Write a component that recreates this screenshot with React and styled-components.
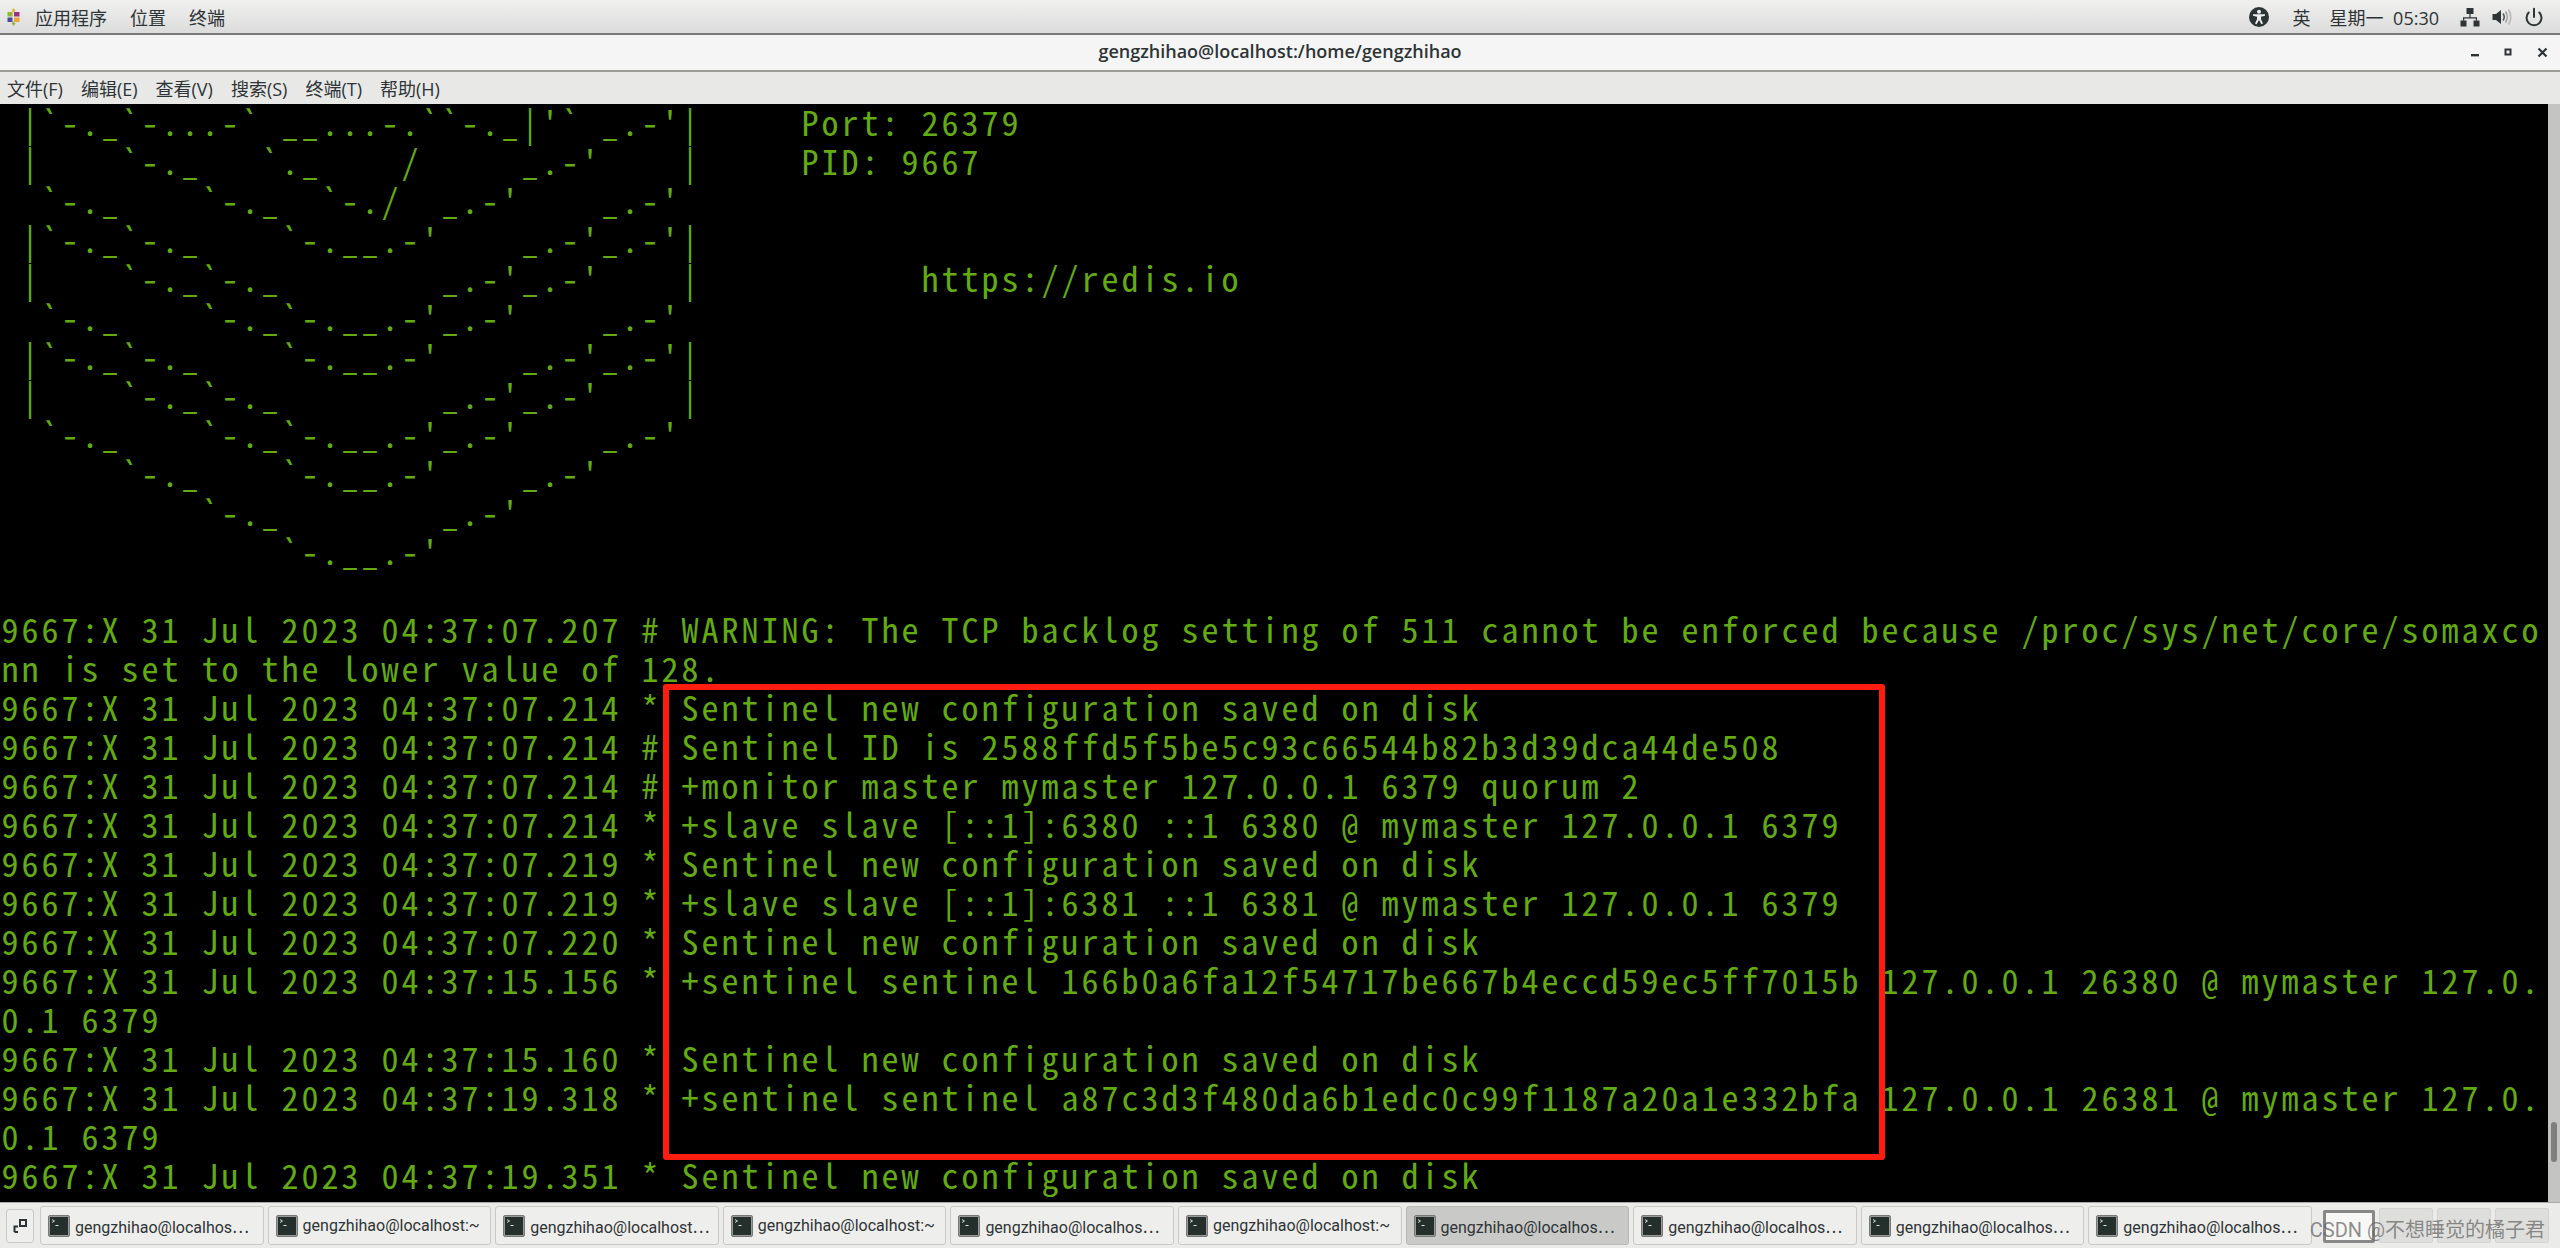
import React from "react";
import styled, { createGlobalStyle } from "styled-components";
import { Power } from "lucide-react";

const UI_FONT = `"Open Sans", "Noto Sans CJK SC", sans-serif`;

const GlobalStyle = createGlobalStyle`
  html, body { margin: 0; padding: 0; background: #000; overflow: hidden; }
  body { font-family: ${UI_FONT}; }
`;

const Desktop = styled.div`
  width: 2560px;
  height: 1248px;
  display: flex;
  flex-direction: column;
  position: relative;
  overflow: hidden;
`;

const TopBar = styled.div`
  height: 33px;
  flex: none;
  display: flex;
  align-items: center;
  justify-content: space-between;
  padding: 0 16px 0 7px;
  background: linear-gradient(#f0f0ef, #dcdcdc);
  border-bottom: 2px solid #7b7b7b;
  color: #2e3436;
  font-size: 18px;
`;

const TopGroup = styled.div`
  display: flex;
  align-items: center;
  gap: ${(p) => p.$gap || 0}px;
`;

const AppMenu = styled.span`
  margin-left: 15px;
`;

const TrayGap = styled.span`
  display: flex;
  align-items: center;
  margin-right: ${(p) => p.$right || 0}px;
`;

const Clock = styled.span`
  margin-right: 21px;
  word-spacing: 5px;
`;

const TitleBar = styled.div`
  height: 37px;
  box-sizing: border-box;
  padding-bottom: 4px;
  flex: none;
  position: relative;
  display: flex;
  align-items: center;
  justify-content: center;
  background: #f5f5f5;
  border-bottom: 2px solid #9a9a96;
  color: #2e3436;
  font-size: 18px;
  font-weight: 600;
`;

const WindowButtons = styled.div`
  position: absolute;
  right: 9px;
  top: 10px;
  display: flex;
  gap: 18px;
  align-items: center;
`;

const MenuBar = styled.div`
  height: 32px;
  flex: none;
  display: flex;
  align-items: center;
  padding-left: 7px;
  gap: 18px;
  background: #e8e8e6;
  color: #2e3436;
  font-size: 18px;
`;

const Terminal = styled.div`
  flex: 1;
  min-height: 0;
  display: flex;
  background: #000;
  position: relative;
`;

const Screen = styled.div`
  flex: 1;
  min-width: 0;
  margin-top: -2px;
  padding-left: 1.5px;
  color: #62ab12;
  font-family: "Noto Sans Mono CJK SC", "DejaVu Sans Mono", monospace;
  font-size: 34px;
  letter-spacing: 3px;
  line-height: 39px;
`;

const Line = styled.div`
  height: 39px;
  white-space: pre;
`;

const Scrollbar = styled.div`
  width: 12px;
  flex: none;
  background: #c4c4c2;
  display: flex;
  flex-direction: column;
  align-items: center;
  justify-content: flex-end;
  padding-bottom: 40px;
`;

const Thumb = styled.div`
  width: 6px;
  height: 40px;
  border-radius: 3px;
  background: #7f7f7f;
`;

const RedBox = styled.div`
  position: absolute;
  left: 663px;
  top: 580px;
  width: 1222px;
  height: 476px;
  box-sizing: border-box;
  border: 6px solid #ff1d10;
  border-radius: 3px;
`;

const TaskBar = styled.div`
  height: 46px;
  flex: none;
  display: flex;
  align-items: center;
  box-sizing: border-box;
  padding: 3px 13px 3px 6px;
  background: #ebebe9;
  border-top: 1px solid #aaa;
`;

const ShowDesktop = styled.div`
  width: 28px;
  height: 34px;
  box-sizing: border-box;
  flex: none;
  margin-right: 6px;
  display: flex;
  align-items: center;
  justify-content: center;
  border: 1px solid #c9c9c7;
  border-radius: 3px;
  background: #eeeeec;
`;

const TaskList = styled.div`
  width: 2272px;
  flex: none;
  display: flex;
  gap: 4px;
`;

const Task = styled.div`
  flex: 1;
  min-width: 0;
  height: 39px;
  box-sizing: border-box;
  display: flex;
  align-items: center;
  gap: 5px;
  padding: 0 7px;
  border-radius: 3px;
  border: 1px solid ${(p) => (p.$active ? "#b8b8b6" : "#c9c9c7")};
  background: ${(p) => (p.$active ? "#c9c9c7" : "#eeeeec")};
  color: #2e3436;
  font-family: Roboto, "Noto Sans CJK SC", sans-serif;
  font-size: 16px;

  svg {
    flex: none;
  }
`;

const TaskLabel = styled.span`
  white-space: nowrap;
`;

const Workspaces = styled.div`
  display: flex;
  align-items: flex-end;
  gap: 4px;
  margin-left: 11px;
`;

const Workspace = styled.div`
  width: ${(p) => (p.$active ? 52 : 54)}px;
  height: ${(p) => (p.$active ? 33 : 35)}px;
  box-sizing: border-box;
  border-radius: 2px;
  border: ${(p) => (p.$active ? "3px solid #888" : "1px solid #d4d4d2")};
  background: ${(p) => (p.$active ? "#f7f7f5" : "#dededc")};
`;

const Watermark = styled.div`
  position: absolute;
  right: 15px;
  bottom: 2px;
  color: rgba(100, 100, 100, 0.72);
  font-family: Roboto, "Noto Sans CJK SC", sans-serif;
  font-size: 20px;
  line-height: 32px;
  white-space: nowrap;
`;

const LOGO_ROWS = [
  " |`-._`-...-` __...-.``-._|'` _.-'|     Port: 26379",
  " |    `-._   `._    /     _.-'    |     PID: 9667",
  "  `-._    `-._  `-./  _.-'    _.-'",
  " |`-._`-._    `-.__.-'    _.-'_.-'|",
  " |    `-._`-._        _.-'_.-'    |           https://redis.io",
  "  `-._    `-._`-.__.-'_.-'    _.-'",
  " |`-._`-._    `-.__.-'    _.-'_.-'|",
  " |    `-._`-._        _.-'_.-'    |",
  "  `-._    `-._`-.__.-'_.-'    _.-'",
  "      `-._    `-.__.-'    _.-'",
  "          `-._        _.-'",
  "              `-.__.-'",
  " ",
];

const LOG_ROWS = [
  "9667:X 31 Jul 2023 04:37:07.207 # WARNING: The TCP backlog setting of 511 cannot be enforced because /proc/sys/net/core/somaxco",
  "nn is set to the lower value of 128.",
  "9667:X 31 Jul 2023 04:37:07.214 * Sentinel new configuration saved on disk",
  "9667:X 31 Jul 2023 04:37:07.214 # Sentinel ID is 2588ffd5f5be5c93c66544b82b3d39dca44de508",
  "9667:X 31 Jul 2023 04:37:07.214 # +monitor master mymaster 127.0.0.1 6379 quorum 2",
  "9667:X 31 Jul 2023 04:37:07.214 * +slave slave [::1]:6380 ::1 6380 @ mymaster 127.0.0.1 6379",
  "9667:X 31 Jul 2023 04:37:07.219 * Sentinel new configuration saved on disk",
  "9667:X 31 Jul 2023 04:37:07.219 * +slave slave [::1]:6381 ::1 6381 @ mymaster 127.0.0.1 6379",
  "9667:X 31 Jul 2023 04:37:07.220 * Sentinel new configuration saved on disk",
  "9667:X 31 Jul 2023 04:37:15.156 * +sentinel sentinel 166b0a6fa12f54717be667b4eccd59ec5ff7015b 127.0.0.1 26380 @ mymaster 127.0.",
  "0.1 6379",
  "9667:X 31 Jul 2023 04:37:15.160 * Sentinel new configuration saved on disk",
  "9667:X 31 Jul 2023 04:37:19.318 * +sentinel sentinel a87c3d3f480da6b1edc0c99f1187a20a1e332bfa 127.0.0.1 26381 @ mymaster 127.0.",
  "0.1 6379",
  "9667:X 31 Jul 2023 04:37:19.351 * Sentinel new configuration saved on disk",
];

const TASKS = [
  { label: "gengzhihao@localhos⋯" },
  { label: "gengzhihao@localhost:~" },
  { label: "gengzhihao@localhost⋯" },
  { label: "gengzhihao@localhost:~" },
  { label: "gengzhihao@localhos⋯" },
  { label: "gengzhihao@localhost:~" },
  { label: "gengzhihao@localhos⋯", active: true },
  { label: "gengzhihao@localhos⋯" },
  { label: "gengzhihao@localhos⋯" },
  { label: "gengzhihao@localhos⋯" },
];

const CentosLogo = () => (
  <svg width="13" height="18" viewBox="0 0 13 18">
    <path d="M6.5 0l2 2.5-2 2-2-2z" fill="#e5b53c" />
    <rect x="0.5" y="4" width="5" height="4.5" fill="#8fb83a" />
    <rect x="7" y="4" width="5.5" height="4.5" fill="#a0307f" />
    <rect x="0.5" y="9.5" width="5" height="4.5" fill="#4c4a9c" />
    <rect x="7" y="9.5" width="5.5" height="4.5" fill="#eaa733" />
    <path d="M6.5 18l-2-2.5 2-2 2 2z" fill="#8fb83a" />
  </svg>
);

const AccessIcon = () => (
  <svg width="20" height="20" viewBox="0 0 20 20">
    <circle cx="10" cy="10" r="10" fill="#2e3436" />
    <circle cx="10" cy="4.8" r="2" fill="#eee" />
    <path d="M4 7.2h12v1.6l-4 1v2.4l2 4.4-1.6.6L10 13l-2.4 4.2L6 16.6l2-4.4V9.8l-4-1z" fill="#eee" />
  </svg>
);

const NetworkIcon = () => (
  <svg width="20" height="20" viewBox="0 0 20 20" fill="#2e3436">
    <rect x="6.5" y="1" width="7" height="6" />
    <rect x="0.5" y="13.5" width="6" height="6" />
    <rect x="13.5" y="13.5" width="6" height="6" />
    <path d="M9.4 7h1.2v3.2h6.4v3.3h-1.2v-2.1H4.2v2.1H3v-3.3h6.4z" />
  </svg>
);

const VolumeIcon = () => (
  <svg width="20" height="20" viewBox="0 0 20 20" fill="none">
    <path d="M0.5 7h3.5l5-4v14l-5-4H0.5z" fill="#2e3436" />
    <path d="M11 6.5c1.4 2 1.4 5 0 7" stroke="#55595a" strokeWidth="1.6" />
    <path d="M13.5 4.5c2.2 3.2 2.2 7.8 0 11" stroke="#9a9c9c" strokeWidth="1.6" />
    <path d="M16.5 2.5c3 4.4 3 10.6 0 15" stroke="#b5b6b6" strokeWidth="1.6" />
  </svg>
);

const MinimizeIcon = () => (
  <svg width="16" height="16" viewBox="0 0 16 16">
    <rect x="4" y="9" width="8" height="2.4" fill="#2e3436" />
  </svg>
);

const MaximizeIcon = () => (
  <svg width="16" height="16" viewBox="0 0 16 16">
    <rect x="4.5" y="4.5" width="5" height="5" fill="none" stroke="#2e3436" strokeWidth="2" />
  </svg>
);

const CloseIcon = () => (
  <svg width="16" height="16" viewBox="0 0 16 16">
    <path d="M3.5 3.5l8 8M11.5 3.5l-8 8" stroke="#2e3436" strokeWidth="2.2" />
  </svg>
);

const ShowDesktopIcon = () => (
  <svg width="15" height="15" viewBox="0 0 15 15" fill="none" stroke="#2e3436" strokeWidth="2">
    <rect x="7" y="2" width="6" height="6" />
    <path d="M1.5 14V8.5H5M1.5 14H5" />
  </svg>
);

const TerminalIcon = () => (
  <svg width="22" height="22" viewBox="0 0 22 22">
    <rect x="0.5" y="0.5" width="21" height="21" rx="1.5" fill="#9a9b98" stroke="#77787a" />
    <rect x="2" y="2" width="18" height="18" fill="#25302c" />
    <path d="M4 4.5l2.5 1.5L4 7.5" fill="none" stroke="#dfe5e2" strokeWidth="0.9" />
    <rect x="7.5" y="10" width="3" height="1" fill="#dfe5e2" />
  </svg>
);

const App = () => (
  <Desktop>
    <GlobalStyle />
    <TopBar>
      <TopGroup $gap={23}>
        <TopGroup>
          <CentosLogo />
          <AppMenu>应用程序</AppMenu>
        </TopGroup>
        <span>位置</span>
        <span>终端</span>
      </TopGroup>
      <TopGroup>
        <TrayGap $right={23}><AccessIcon /></TrayGap>
        <TrayGap $right={19}>英</TrayGap>
        <Clock>星期一 05:30</Clock>
        <TrayGap $right={12}><NetworkIcon /></TrayGap>
        <TrayGap $right={12}><VolumeIcon /></TrayGap>
        <Power size={20} color="#2e3436" strokeWidth={2.4} />
      </TopGroup>
    </TopBar>
    <TitleBar>
      gengzhihao@localhost:/home/gengzhihao
      <WindowButtons>
        <MinimizeIcon />
        <MaximizeIcon />
        <CloseIcon />
      </WindowButtons>
    </TitleBar>
    <MenuBar>
      <span>文件(F)</span>
      <span>编辑(E)</span>
      <span>查看(V)</span>
      <span>搜索(S)</span>
      <span>终端(T)</span>
      <span>帮助(H)</span>
    </MenuBar>
    <Terminal>
      <Screen>
        {LOGO_ROWS.concat(LOG_ROWS).map((row, i) => (
          <Line key={i}>{row}</Line>
        ))}
      </Screen>
      <Scrollbar>
        <Thumb />
      </Scrollbar>
      <RedBox />
    </Terminal>
    <TaskBar>
      <ShowDesktop>
        <ShowDesktopIcon />
      </ShowDesktop>
      <TaskList>
        {TASKS.map((task, i) => (
          <Task key={i} $active={task.active}>
            <TerminalIcon />
            <TaskLabel>{task.label}</TaskLabel>
          </Task>
        ))}
      </TaskList>
      <Workspaces>
        <Workspace $active />
        <Workspace />
        <Workspace />
        <Workspace />
      </Workspaces>
    </TaskBar>
    <Watermark>CSDN @不想睡觉的橘子君</Watermark>
  </Desktop>
);

export default App;
